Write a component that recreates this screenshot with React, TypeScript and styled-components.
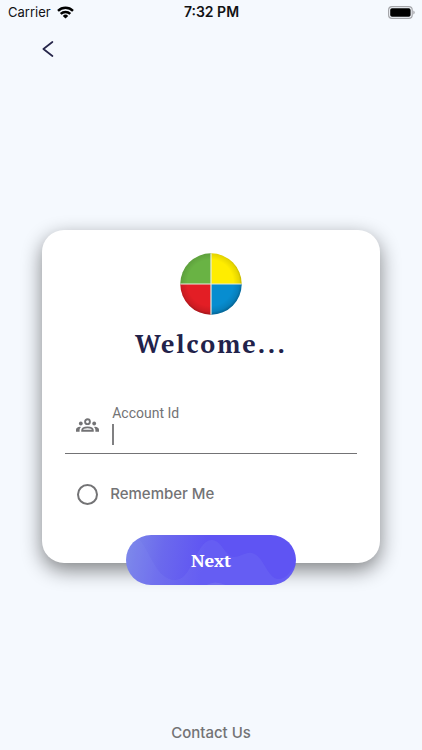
import React, { useState } from "react";
import styled, { createGlobalStyle } from "styled-components";

const GlobalStyle = createGlobalStyle`
  *, *::before, *::after { box-sizing: border-box; }
  body {
    margin: 0;
    background: #f5f9fe;
    font-family: "Roboto", "Liberation Sans", sans-serif;
    color: #737375;
  }
  button, input { font: inherit; }
`;

const Page = styled.div`
  min-height: 100vh;
  display: flex;
  flex-direction: column;
`;

const StatusBar = styled.header`
  display: grid;
  grid-template-columns: 1fr auto 1fr;
  align-items: center;
  height: 24px;
  padding: 0 7px 0 8px;
  font-family: "Inter", sans-serif;
  font-size: 13px;
  line-height: 24px;
  color: #111214;
`;

const Carrier = styled.span`
  display: flex;
  align-items: center;
  gap: 6px;
`;

const Clock = styled.time`
  font-size: 14px;
  font-weight: 600;
`;

const Battery = styled.svg`
  justify-self: end;
`;

const NavBar = styled.nav`
  height: 50px;
  padding: 11px 34px;
`;

const BackButton = styled.button`
  display: grid;
  place-items: center;
  width: 28px;
  height: 28px;
  padding: 0;
  border: 0;
  background: none;
  color: #26264a;
  cursor: pointer;
`;

const Main = styled.main`
  flex: 1;
  display: flex;
  align-items: center;
  justify-content: center;
`;

const Card = styled.form`
  display: flex;
  flex-direction: column;
  width: 80%;
  max-width: 480px;
  padding: 23px 23px 0;
  border-radius: 22px;
  background: #fff;
  box-shadow: 0 7px 20px rgba(0, 0, 0, 0.48);
`;

const Logo = styled.svg`
  align-self: center;
`;

const Title = styled.h1`
  margin: 12px 0 44px;
  font-family: "PT Serif", "Liberation Serif", serif;
  font-size: 25px;
  line-height: 34px;
  font-weight: 700;
  letter-spacing: 2px;
  text-align: center;
  color: #22224a;
`;

const Field = styled.div`
  display: flex;
  align-items: center;
  gap: 13px;
  height: 49px;
  padding: 0 0 8px 11px;
  border-bottom: 1px solid #737375;
`;

const FieldBody = styled.div`
  flex: 1;
  display: flex;
  flex-direction: column;
`;

const FieldLabel = styled.label`
  font-size: 14px;
  line-height: 18px;
`;

const Entry = styled.div`
  display: flex;
  align-items: center;
  height: 24px;
`;

const Caret = styled.span`
  width: 2px;
  height: 21px;
  background: #808082;
`;

const TextInput = styled.input`
  flex: 1;
  min-width: 0;
  height: 24px;
  padding: 0;
  border: 0;
  outline: 0;
  background: transparent;
  color: #22224a;
  font-size: 16px;
`;

const Remember = styled.label`
  display: flex;
  align-items: center;
  gap: 12px;
  margin: 27px 0 28px;
  padding-left: 12px;
  font-family: "Inter", sans-serif;
  font-size: 15px;
  line-height: 26px;
  font-weight: 500;
  cursor: pointer;
`;

const RoundCheck = styled.input`
  appearance: none;
  width: 21px;
  height: 21px;
  margin: 0;
  border: 2px solid #737375;
  border-radius: 50%;

  &:checked {
    background: #5f54f3;
    box-shadow: inset 0 0 0 3px #fff;
  }
`;

const NextButton = styled.button`
  position: relative;
  align-self: center;
  width: 58%;
  height: 50px;
  margin-bottom: -22px;
  padding: 0;
  overflow: hidden;
  border: 0;
  border-radius: 25px;
  background: linear-gradient(100deg, #7d8ae9 0%, #6b69ed 22%, #5f54f3 46%, #5f54f3 100%);
  color: #fff;
  font-family: "PT Serif", "Liberation Serif", serif;
  font-size: 18px;
  line-height: 50px;
  font-weight: 700;
  cursor: pointer;
`;

const Waves = styled.svg`
  position: absolute;
  inset: 0;
  width: 100%;
  height: 100%;
`;

const ButtonText = styled.span`
  position: relative;
`;

const Footer = styled.footer`
  height: 31px;
  text-align: center;
`;

const ContactLink = styled.a`
  font-family: "Inter", sans-serif;
  font-size: 15px;
  line-height: 28px;
  font-weight: 500;
  color: inherit;
  text-decoration: none;
`;

function WifiIcon() {
  return (
    <svg width="17" height="13" viewBox="0 0 17 13" fill="none" stroke="#000" strokeWidth="2.4" aria-hidden="true">
      <path d="M1 4.8a10.8 10.8 0 0 1 15 0" />
      <path d="M3.7 7.9a6.9 6.9 0 0 1 9.6 0" />
      <path d="M8.5 12.6 5.8 9.9a3.9 3.9 0 0 1 5.4 0Z" fill="#000" stroke="none" />
    </svg>
  );
}

function BatteryIcon() {
  return (
    <Battery width="27" height="13" viewBox="0 0 27 13" aria-label="Battery full">
      <rect x="0.6" y="0.6" width="23.6" height="11.8" rx="3.4" fill="none" stroke="#a5a6aa" strokeWidth="1.2" />
      <rect x="2.2" y="2.2" width="20.4" height="8.6" rx="1.8" fill="#000" />
      <path d="M25.3 4.5q1.4.6 1.4 2t-1.4 2Z" fill="#a5a6aa" />
    </Battery>
  );
}

function QuadrantLogo() {
  return (
    <Logo width="62" height="62" viewBox="0 0 62 62" role="img" aria-label="Company logo">
      <defs>
        <clipPath id="disc"><circle cx="31" cy="31" r="30.7" /></clipPath>
        <radialGradient id="rim" cx="0.49" cy="0.48" r="0.53">
          <stop offset="0.7" stopColor="#000" stopOpacity="0" />
          <stop offset="0.88" stopColor="#000" stopOpacity="0.1" />
          <stop offset="1" stopColor="#000" stopOpacity="0.36" />
        </radialGradient>
      </defs>
      <g clipPath="url(#disc)">
        <path fill="#69b344" d="M0 0h31v31H0z" />
        <path fill="#ffed00" d="M31 0h31v31H31z" />
        <path fill="#e31e25" d="M0 31h31v31H0z" />
        <path fill="#078dd0" d="M31 31h31v31H31z" />
        <circle cx="31" cy="31" r="31" fill="url(#rim)" />
        <path d="M31 0v62M0 31h62" stroke="#e6ebdf" strokeWidth="1.2" />
      </g>
    </Logo>
  );
}

function GroupIcon() {
  return (
    <svg width="23" height="15" viewBox="0 0 23 15" fill="#737375" aria-hidden="true">
      <circle cx="11.5" cy="3.7" r="2.4" fill="none" stroke="#737375" strokeWidth="1.9" />
      <circle cx="4.8" cy="5.5" r="1.9" />
      <circle cx="18.2" cy="5.5" r="1.9" />
      <path d="M6.2 12.8v-.5c0-1.9 2.8-2.9 5.3-2.9s5.3 1 5.3 2.9v.5Z" fill="none" stroke="#737375" strokeWidth="1.9" />
      <path d="M4 8.8c-2.4.3-4 1.4-4 2.9v2h3.6v-1.4c0-1.3.5-2.4 1.4-3.3ZM19 8.8c2.4.3 4 1.4 4 2.9v2h-3.6v-1.4c0-1.3-.5-2.4-1.4-3.3Z" />
    </svg>
  );
}

export default function App() {
  const [account, setAccount] = useState("");
  const [remember, setRemember] = useState(false);

  return (
    <>
      <GlobalStyle />
      <Page>
        <StatusBar>
          <Carrier>Carrier <WifiIcon /></Carrier>
          <Clock>7:32 PM</Clock>
          <BatteryIcon />
        </StatusBar>
        <NavBar>
          <BackButton type="button" aria-label="Back">
            <svg width="12" height="16" viewBox="0 0 12 16" fill="none" stroke="currentColor" strokeWidth="1.7" strokeLinecap="round" strokeLinejoin="round">
              <path d="M10.4 1 1.4 8l9 7" />
            </svg>
          </BackButton>
        </NavBar>
        <Main>
          <Card onSubmit={(event: React.FormEvent) => event.preventDefault()}>
            <QuadrantLogo />
            <Title>Welcome...</Title>
            <Field>
              <GroupIcon />
              <FieldBody>
                <FieldLabel htmlFor="account">Account Id</FieldLabel>
                <Entry>
                  {account === "" && <Caret />}
                  <TextInput id="account" value={account} onChange={(event) => setAccount(event.target.value)} />
                </Entry>
              </FieldBody>
            </Field>
            <Remember>
              <RoundCheck type="checkbox" checked={remember} onChange={(event) => setRemember(event.target.checked)} />
              Remember Me
            </Remember>
            <NextButton type="submit">
              <Waves viewBox="0 0 168 50" preserveAspectRatio="none" aria-hidden="true">
                <path fill="#8a8cf0" fillOpacity="0.16" d="M13 4C24 16 30 45 49 45c17 0 20-39 36-40 10 0 13 16 22 17 8 0 11-5 18-4 12 2 15 26 27 26 8 0 12-9 16-13v19H0V4Z" />
                <path fill="#8a8cf0" fillOpacity="0.3" d="M80 50q8-5 19 0Z" />
              </Waves>
              <ButtonText>Next</ButtonText>
            </NextButton>
          </Card>
        </Main>
        <Footer>
          <ContactLink href="#contact">Contact Us</ContactLink>
        </Footer>
      </Page>
    </>
  );
}
